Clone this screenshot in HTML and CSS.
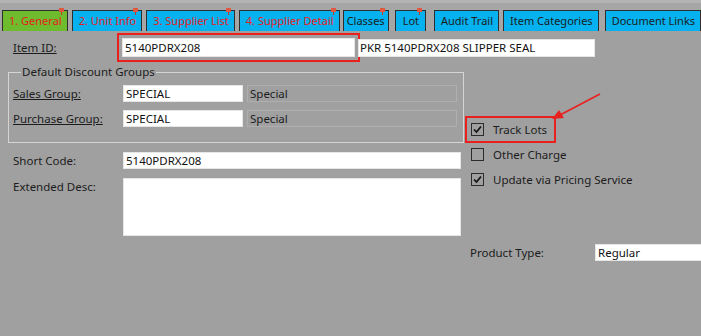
FILE: index.html
```html
<!DOCTYPE html>
<html lang="en">
<head>
    <meta charset="UTF-8">
    <title>Item Maintenance - General</title>
    <link rel="stylesheet" href="styles.css">
</head>
<body>
    <div class="tabs">
        <div class="tab tab-green tab-flag">1. General<span class="pin"></span></div>
        <div class="tab tab-flag">2. Unit Info<span class="pin"></span></div>
        <div class="tab tab-flag">3. Supplier List<span class="pin"></span></div>
        <div class="tab tab-flag">4. Supplier Detail<span class="pin"></span></div>
        <div class="tab tab-classes">Classes<span class="pin"></span></div>
        <div class="tab tab-lot">Lot<span class="pin"></span></div>
        <div class="tab tab-audit">Audit Trail</div>
        <div class="tab">Item Categories</div>
        <div class="tab tab-docs">Document Links</div>
    </div>

    <div class="panel">
        <div class="row-id">
            <label class="lbl lbl-id"><u>Item ID:</u></label>
            <input class="field field-id" type="text" value="5140PDRX208">
            <input class="field field-desc" type="text" value="PKR 5140PDRX208 SLIPPER SEAL">
        </div>

        <div class="body">
            <div class="left">
                <fieldset class="group">
                    <legend>Default Discount Groups</legend>
                    <div class="group-row">
                        <label class="lbl lbl-group"><u>Sales Group:</u></label>
                        <input class="field field-code" type="text" value="SPECIAL">
                        <div class="readonly">Special</div>
                    </div>
                    <div class="group-row">
                        <label class="lbl lbl-group"><u>Purchase Group:</u></label>
                        <input class="field field-code" type="text" value="SPECIAL">
                        <div class="readonly">Special</div>
                    </div>
                </fieldset>

                <div class="form-row">
                    <label class="lbl lbl-form">Short Code:</label>
                    <input class="field field-wide" type="text" value="5140PDRX208">
                </div>
                <div class="form-row">
                    <label class="lbl lbl-form">Extended Desc:</label>
                    <textarea class="field field-area"></textarea>
                </div>
            </div>

            <div class="right">
                <div class="check check-marked">
                    <span class="box"><svg width="11" height="11" viewBox="0 0 11 11"><path d="M2 5.5 L4.5 8 L9 2.5" fill="none" stroke="#111" stroke-width="1.7"/></svg></span>
                    Track Lots
                </div>
                <div class="check">
                    <span class="box"></span>
                    Other Charge
                </div>
                <div class="check">
                    <span class="box"><svg width="11" height="11" viewBox="0 0 11 11"><path d="M2 5.5 L4.5 8 L9 2.5" fill="none" stroke="#111" stroke-width="1.7"/></svg></span>
                    Update via Pricing Service
                </div>

                <div class="product-row">
                    <label class="lbl lbl-product">Product Type:</label>
                    <input class="field field-product" type="text" value="Regular">
                </div>
            </div>
        </div>

        <svg class="arrow" width="60" height="36" viewBox="0 0 60 36">
            <line x1="54" y1="4" x2="14" y2="25" stroke="#e8211f" stroke-width="1.6"/>
            <polygon points="6,29 13,20 18,28" fill="#e8211f"/>
        </svg>
    </div>
</body>
</html>
```

FILE: styles.css
```css
body { margin: 0; width: 701px; height: 336px; overflow: hidden; background: #a0a0a0; font-family: 'Noto Sans', sans-serif; font-size: 11.5px; color: #1c1c1c; }

/* tab strip */
.tabs { display: flex; gap: 4px; padding: 10px 0 0 2px; height: 21px; background: linear-gradient(#b3b3b3 0, #b3b3b3 3px, #a6a6a6 3px); }
.tab { position: relative; box-sizing: border-box; height: 21px; line-height: 19px; padding: 0 5px 0 6px; font-size: 11px; background: #05b1ee; border: 1px solid #2e2e2e; border-bottom: none; white-space: nowrap; }
.tab-green { background: #6ebb2d; }
.tab-flag { color: #e5211e; }
.tab-classes { margin-left: -1px; padding: 0 3px; }
.tab-lot { margin-left: 2px; padding: 0 6px 0 7px; }
.tab-audit { margin-left: 4px; }
.tab-docs { margin-left: 2px; }
.pin { position: absolute; right: 3px; top: -3px; width: 5px; height: 4px; background: #e0573f; }
.pin::after { content: ''; position: absolute; left: 2px; top: 4px; width: 1px; height: 3px; background: #c0392b; }

/* content */
.panel { position: relative; padding: 7px 0 0 8px; height: 298px; box-sizing: border-box; }
.lbl { display: block; box-sizing: border-box; padding-left: 5px; }
.field { box-sizing: border-box; margin: 0; border: 1px solid #e6e6e6; background: #fff; font-family: inherit; font-size: 11.5px; color: #111; padding: 0 2px; outline: none; }

.row-id { display: flex; align-items: center; height: 19px; }
.lbl-id { width: 114px; }
.field-id { width: 233px; height: 19px; outline: 2px solid #e8211f; outline-offset: 3px; }
.field-desc { width: 237px; height: 18px; margin-left: 3px; padding-left: 1px; }

.body { display: flex; margin-top: 8px; }
.left { width: 456px; }
.right { margin-left: 2px; padding-top: 52px; }

.group { margin: 0; padding: 6px 6px 15px 4px; border: 1px solid #d4d4d4; }
.group legend { padding: 0 1px; margin-left: 8px; line-height: 14px; }
.group-row { display: flex; align-items: center; height: 17px; }
.group-row + .group-row { margin-top: 8px; }
.lbl-group { width: 110px; padding-left: 0; }
.field-code { width: 120px; height: 17px; }
.readonly { box-sizing: border-box; width: 210px; height: 17px; margin-left: 4px; padding-left: 2px; line-height: 15px; border: 1px solid #afafaf; }

.form-row { display: flex; align-items: flex-start; margin-top: 9px; }
.form-row .lbl-form { width: 115px; line-height: 17px; }
.field-wide { width: 338px; height: 17px; }
.field-area { width: 338px; height: 58px; resize: none; }

.check { display: flex; align-items: center; gap: 9px; height: 25px; padding: 0 8px 0 5px; width: max-content; }
.check-marked { outline: 2px solid #e8211f; outline-offset: -1px; }
.box { box-sizing: border-box; width: 13px; height: 13px; border: 1px solid #2c2c2c; display: flex; align-items: center; justify-content: center; }

.product-row { display: flex; align-items: center; margin-top: 52px; }
.lbl-product { width: 129px; padding-left: 4px; }
.field-product { width: 110px; height: 17px; }

.arrow { position: absolute; left: 546px; top: 59px; }
```
